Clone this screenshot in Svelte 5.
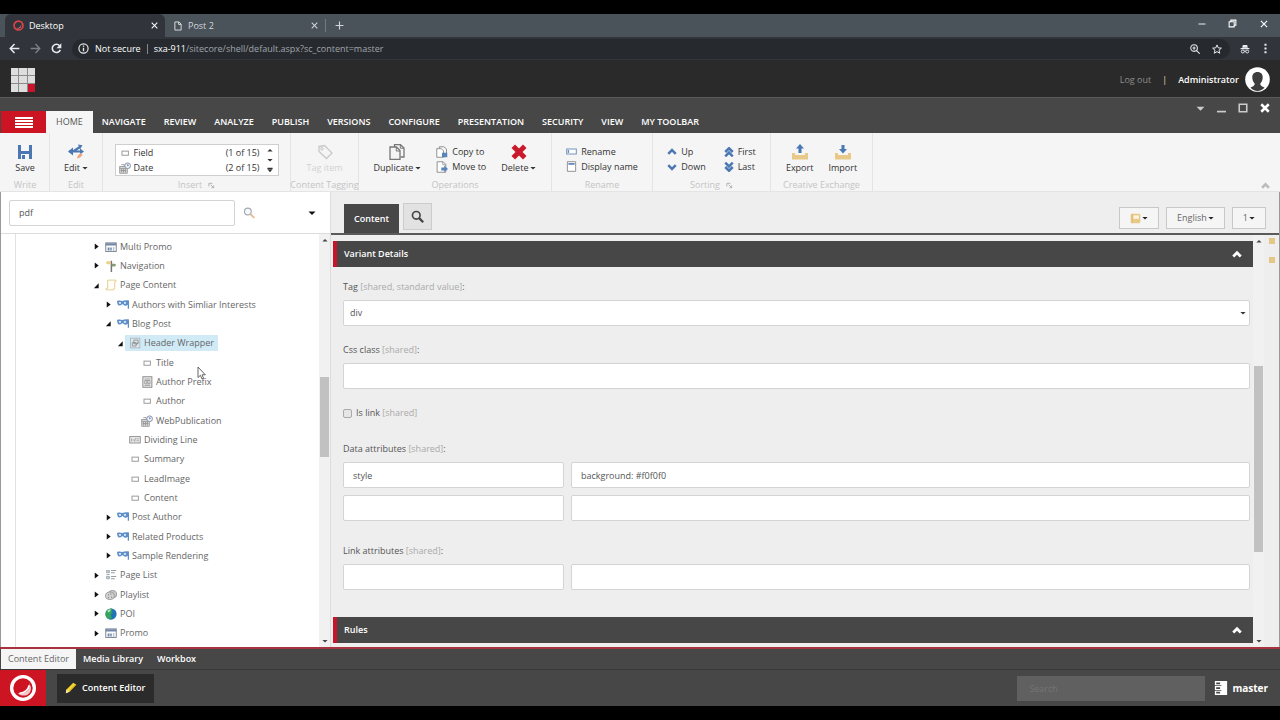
<script>
    const tabs = ["NAVIGATE", "REVIEW", "ANALYZE", "PUBLISH", "VERSIONS", "CONFIGURE", "PRESENTATION", "SECURITY", "VIEW", "MY TOOLBAR"];

    const tree = [
        { text: "Multi Promo", level: 0, icon: "promo", arrow: "closed" },
        { text: "Navigation", level: 0, icon: "signpost", arrow: "closed" },
        { text: "Page Content", level: 0, icon: "scroll", arrow: "open" },
        { text: "Authors with Simliar Interests", level: 1, icon: "mask", arrow: "closed" },
        { text: "Blog Post", level: 1, icon: "mask", arrow: "open" },
        { text: "Header Wrapper", level: 2, icon: "wrapper", arrow: "open" },
        { text: "Title", level: 3, icon: "field" },
        { text: "Author Prefix", level: 3, icon: "textbox" },
        { text: "Author", level: 3, icon: "field" },
        { text: "WebPublication", level: 3, icon: "date" },
        { text: "Dividing Line", level: 2, icon: "divider" },
        { text: "Summary", level: 2, icon: "field" },
        { text: "LeadImage", level: 2, icon: "field" },
        { text: "Content", level: 2, icon: "field" },
        { text: "Post Author", level: 1, icon: "mask", arrow: "closed" },
        { text: "Related Products", level: 1, icon: "mask", arrow: "closed" },
        { text: "Sample Rendering", level: 1, icon: "mask", arrow: "closed" },
        { text: "Page List", level: 0, icon: "pagelist", arrow: "closed" },
        { text: "Playlist", level: 0, icon: "reel", arrow: "closed" },
        { text: "POI", level: 0, icon: "globe", arrow: "closed" },
        { text: "Promo", level: 0, icon: "promo", arrow: "closed" }
    ];

    let selected = $state("Header Wrapper");
    let search = $state("pdf");
    let isLink = $state(false);
</script>

<svelte:head>
    <title>Desktop</title>
</svelte:head>

{#snippet icon(name, size)}
    <svg class="icon" width={size} height={size} viewBox="0 0 16 16" fill="none" aria-hidden="true">
        {#if name === "promo"}
            <rect x="1" y="2.5" width="14" height="11.5" fill="#fff" stroke="#7d8794" stroke-width="1.3" />
            <path d="M1 3h14v3H1z" fill="#7386a8" />
            <path d="M3.5 8.5h2.5v4H3.5zM7 8.5h2v4H7zM10.5 8.5h2v1.5h-2zM10.5 11.3h2v1.3h-2z" fill="#7386a8" />
        {:else if name === "signpost"}
            <path d="M8.5 1v15" stroke="#777" stroke-width="2" />
            <path d="M1 3.5l2-2h5v4H3z" fill="#eccf8a" />
            <path d="M9 5h4l2 1.8L13 8.5H9z" fill="#8b9b76" />
        {:else if name === "scroll"}
            <path d="M3.5 1.5h11v2h-1.5v9.5h-1.5v1.500h-10v-2H3.5z" fill="#fffdf5" stroke="#e3cf93" stroke-width="1.3" />
        {:else if name === "mask"}
            <path d="M0 2.5c3-1 5-.5 7 0 2-.5 5-1 9-.5V13h-1.700V7.500c-1.500 2-4.300 2-5.800.2L7.300 6.500 6 7.700C4.500 9.500 1 9.200.5 6z" fill="#5e8fc9" />
            <path d="M2.200 4.300h3.300L5 6.300H3zM9 4.300h3.300l-.8 2H9.700z" fill="#fff" />
        {:else if name === "wrapper"}
            <rect x="2" y="1.5" width="12.5" height="13" fill="#dfe5e8" stroke="#a3adb2" />
            <path d="M6.5 4h5.500v5H6.500zM4.500 7.500h5v4.500h-5zM10 10l3-3" stroke="#7c868b" />
        {:else if name === "field"}
            <rect x="4" y="5.5" width="8.5" height="5.5" fill="#fff" stroke="#999" stroke-width="1.3" />
        {:else if name === "textbox"}
            <rect x="2.500" y="1" width="12" height="14" fill="#eee" stroke="#888" stroke-width="1.300" />
            <path d="M4.500 4h8M4.500 12.500h8M5 6h7v4.500H5zM6 7l5 3M7 10l3-4" stroke="#8a8a8a" />
        {:else if name === "date"}
            <rect x="1" y="6" width="10" height="9" fill="#ddd" stroke="#888" />
            <path d="M1 8.500h10M3.500 9v5M6 9v5M8.500 9v5M2 11.500h8M3 3.500h4v2" stroke="#888" />
            <circle cx="11.500" cy="5" r="3.800" fill="#edf2fa" stroke="#8791a4" stroke-width="1.300" />
            <path d="M11.500 2.800V5.200l1.600-1" stroke="#5d74a3" />
        {:else if name === "divider"}
            <rect x="1" y="3.500" width="14" height="8.500" fill="#eee" stroke="#888" stroke-width="1.200" />
            <path d="M3.500 6v4M5 8h2M8.500 5.500l-1 5M10 6.500h3M10 9h3" stroke="#888" />
        {:else if name === "pagelist"}
            <path d="M2 2h4v3H2zM2 10h4v3H2z" fill="#c2cad1" stroke="#9aa3aa" />
            <path d="M8 2h7M8 5h5M8 10h7M8 13h5M2 7.500h4" stroke="#999" stroke-width="1.300" />
        {:else if name === "reel"}
            <ellipse cx="10" cy="7" rx="5.500" ry="5" fill="#c8c8c8" stroke="#888" />
            <ellipse cx="6.500" cy="9" rx="5.800" ry="5" fill="#d4d4d4" stroke="#888" />
            <path d="M4 7h1.500v1.500H4zM7 6h1.500v1.500H7zM4 10.500h1.500V12H4zM8 10h1.500v1.500H8z" fill="#888" />
        {:else if name === "globe"}
            <circle cx="8" cy="8" r="7.500" fill="#2173b8" />
            <path d="M2 3.800C5 .5 8 .2 10 1L8.500 4l2 2-3 2.500L9 12l-2 3.300C3 15 .5 11.500.5 8z" fill="#36a45c" />
            <path d="M3 4c2-2 4-2.300 5-1.500L5 6z" fill="#b9e8c0" />
        {:else if name === "save"}
            <path d="M1 1h14v14H1z" fill="#4b77b3" />
            <path d="M4 1h8v6H4zM4 10h8v5H4z" fill="#f4f6fa" />
            <path d="M5 11h3v4H5z" fill="#4b77b3" />
        {:else if name === "edit"}
            <path d="M1 7.500h5M5 7.500L12 3M5 7.500h9" stroke="#4b77b3" stroke-width="2.200" />
            <path d="M0 7.500l5-4v8zM10 0.500l4.500.8-2.500 4zM12 4.500l4 3-4 3z" fill="#4b77b3" />
            <path d="M9 14.500l1-3 2.500-2.500 2 2-2.500 2.500z" fill="#e9a27c" />
        {:else if name === "tag"}
            <path d="M2 2.500l5.500-1L15 9l-5.500 5.500L2 7.500z" stroke="#c8c8c8" stroke-width="1.300" />
            <circle cx="5" cy="4.800" r="1.300" stroke="#c8c8c8" />
        {:else if name === "duplicate"}
            <path d="M5.500 3V.7h6L15 4v9h-3.500" stroke="#777" stroke-width="1.300" />
            <path d="M1 3h6.500L11 6.500V15.300H1z" fill="#f5f5f5" stroke="#777" stroke-width="1.300" />
            <path d="M7.300 3v4H11M11.300 1v3.200H15" stroke="#777" />
        {:else if name === "copy"}
            <path d="M4.500 3V1h6L14 4v6" stroke="#888" stroke-width="1.200" />
            <path d="M1 3.500h6L10 6.500V15H1z" fill="#fff" stroke="#888" stroke-width="1.200" />
            <path d="M8 9h7v6H8z" fill="#5b84ba" />
        {:else if name === "move"}
            <path d="M1.500 1h8L13 4.500V15H1.500z" fill="#fff" stroke="#888" stroke-width="1.200" />
            <path d="M9 1v4h4" stroke="#888" />
            <path d="M7 8.500h4V6l5 4.500-5 4.500v-2.500H7z" fill="#5b84ba" />
        {:else if name === "delete"}
            <path d="M4 .5l4 4 4-4L15.500 4l-4 4 4 4-3.500 3.500-4-4-4 4L.5 12l4-4-4-4z" fill="#c9192b" />
        {:else if name === "rename"}
            <path d="M1 4.500h14v7H1z" fill="#fff" stroke="#7795bd" stroke-width="1.500" />
            <path d="M2.500 6h2v4h-2z" fill="#5b84ba" />
        {:else if name === "display"}
            <path d="M2 1h12v14H2z" fill="#fff" stroke="#888" stroke-width="1.300" />
            <path d="M3.500 3h9v2.500h-9z" fill="#5b84ba" />
        {:else if name === "up"}
            <path d="M2 11l6-6 6 6" stroke="#4b77b3" stroke-width="4" />
        {:else if name === "down"}
            <path d="M2 5l6 6 6-6" stroke="#4b77b3" stroke-width="4" />
        {:else if name === "first"}
            <path d="M2 8l6-6 6 6M2 15l6-6 6 6" stroke="#4b77b3" stroke-width="4" />
        {:else if name === "last"}
            <path d="M2 1l6 6 6-6M2 8l6 6 6-6" stroke="#4b77b3" stroke-width="4" />
        {:else if name === "export" || name === "import"}
            <path d="M0 9h3v2h10V9h3v6.500H0z" fill="#e8c98a" />
            <path d={name === "export" ? "M8 0l4 4.500H9.500V9h-3V4.500H4z" : "M8 9.500L4 5h2.500V1h3v4H12z"} fill="#4b77b3" />
        {:else if name === "lens"}
            <circle cx="6.500" cy="6" r="4.500" fill="#f6f8fb" stroke="#a3a9b5" stroke-width="1.500" />
            <path d="M10 9.500l5 5" stroke="#e4b993" stroke-width="2.500" />
        {:else if name === "find"}
            <circle cx="6.500" cy="6.500" r="4.700" stroke="#444" stroke-width="2" />
            <path d="M10 10l5 5" stroke="#444" stroke-width="2.800" />
        {:else if name === "launch"}
            <path d="M2 10V3h8M6 6l6 6M13 8v5H8" stroke="#aaa" stroke-width="2" />
        {:else if name === "book"}
            <rect x="1" y="1" width="14" height="14" rx="2" fill="#e8c98a" />
            <path d="M5 3.500h8v5H5z" fill="#fbf3df" />
            <path d="M3 1v14" stroke="#d9b46b" />
        {:else if name === "caret"}
            <path d="M1 5h14l-7 7z" fill="currentColor" />
        {:else if name === "caretup"}
            <path d="M1 12h14L8 5z" fill="currentColor" />
        {:else if name === "more"}
            <path d="M1 2h14v3H1zM1 6h14l-7 8z" fill="currentColor" />
        {:else if name === "closed"}
            <path d="M4 1l9 7-9 7z" fill="#111" />
        {:else if name === "open"}
            <path d="M13 3v11H2z" fill="#111" />
        {:else if name === "chevron"}
            <path d="M2 12l6-6 6 6" stroke="currentColor" stroke-width="4.500" />
        {:else if name === "cross"}
            <path d="M3 3l10 10M13 3L3 13" stroke="currentColor" stroke-width="1.800" />
        {:else if name === "boldcross"}
            <path d="M2 2l12 12M14 2L2 14" stroke="currentColor" stroke-width="4" />
        {:else if name === "plus"}
            <path d="M8 1v14M1 8h14" stroke="currentColor" stroke-width="2" />
        {:else if name === "minus"}
            <path d="M1 8h14" stroke="currentColor" stroke-width="1.800" />
        {:else if name === "lowbar"}
            <path d="M0 13.500h16" stroke="currentColor" stroke-width="3" />
        {:else if name === "square"}
            <path d="M2 2h12v12H2z" stroke="currentColor" stroke-width="2.500" />
        {:else if name === "restore"}
            <path d="M2 5h9v9H2zM5 5V2h9v9h-3" stroke="currentColor" stroke-width="1.900" />
        {:else if name === "back"}
            <path d="M15 8H2M8 1.500L1.800 8 8 14.500" stroke="currentColor" stroke-width="2.200" />
        {:else if name === "forward"}
            <path d="M1 8h13M8 1.500L14.200 8 8 14.500" stroke="currentColor" stroke-width="2" />
        {:else if name === "reload"}
            <path d="M13.500 10A6 6 0 1 1 12.500 4" stroke="currentColor" stroke-width="2.300" />
            <path d="M15 .5v7H8z" fill="currentColor" />
        {:else if name === "info"}
            <circle cx="8" cy="8" r="6.700" stroke="currentColor" stroke-width="1.700" />
            <path d="M8 7v5M8 3.800v1.800" stroke="currentColor" stroke-width="1.900" />
        {:else if name === "zoomin"}
            <circle cx="6.500" cy="6.500" r="5.300" stroke="currentColor" stroke-width="1.700" />
            <path d="M10.500 10.500l5 5M4 6.500h5M6.500 4v5" stroke="currentColor" stroke-width="1.700" />
        {:else if name === "star"}
            <path d="M8 1.500l2 4.700 5 .4-3.800 3.300 1.200 4.900L8 12.200l-4.400 2.600 1.200-4.900L1 6.600l5-.4z" stroke="currentColor" stroke-width="1.600" />
        {:else if name === "incognito"}
            <path d="M4.500 1.500h7l1 4.500h-9zM1 6.500h14v2H1z" fill="currentColor" />
            <circle cx="4.500" cy="12" r="2.400" stroke="currentColor" stroke-width="1.500" />
            <circle cx="11.500" cy="12" r="2.400" stroke="currentColor" stroke-width="1.500" />
            <path d="M6.500 11.500h3" stroke="currentColor" stroke-width="1.500" />
        {:else if name === "dots"}
            <path d="M6.500 1h3v3h-3zM6.500 6.500h3v3h-3zM6.500 12h3v3h-3z" fill="currentColor" />
        {:else if name === "page"}
            <path d="M3 1.500h6.500L13 5v9.500H3zM9 1.500V5.500h4" stroke="currentColor" stroke-width="1.600" />
        {:else if name === "favicon"}
            <circle cx="8" cy="8" r="6.500" stroke="#d8434a" stroke-width="2.500" />
            <path d="M12 5c0 4-2 6.500-6.500 6.500 2 2 7.500 1 6.500-6.500z" fill="#e87479" />
        {:else if name === "sitecore"}
            <circle cx="8" cy="8" r="6.500" fill="#cd1423" stroke="#fff" stroke-width="1.900" />
            <path d="M11.500 5c1 4-1.500 6.500-6.500 6 2.500 2.500 8 1.500 7.500-3.500z" fill="#f6c9cd" />
            <path d="M11.500 6.500c-.5 3-2.500 4.200-5.500 4.500" stroke="#fff" />
        {:else if name === "pencil"}
            <path d="M1 15l1-5L11 1l4 2.500L6 13z" fill="#f2d62d" />
            <path d="M1 15l1-5 4 3z" fill="#f7e6bd" />
            <path d="M5 12.500L14 3l1 .5L6 13z" fill="#d9a514" />
        {:else if name === "server"}
            <path d="M1 0h14v16H1z" fill="#fff" />
            <path d="M2.500 1.700h4.500v2H2.500zM2.500 7h4.500v2H2.500zM2.500 12.300h4.500v2H2.500zM0 4.800h8.500v1H0zM0 10.200h8.500v1H0z" fill="#474747" />
        {/if}
    </svg>
{/snippet}

{#snippet scrollbar(kind)}
    <div class="scrollbar {kind}">
        {@render icon("caretup", 6)}
        <div class="track"><div class="thumb"></div></div>
        {@render icon("caret", 6)}
    </div>
{/snippet}

{#snippet pair(id, name, value)}
    <div class="pair">
        <input class="box" {id} aria-label="Attribute name" value={name} />
        <input class="box" aria-label="Attribute value" {value} />
    </div>
{/snippet}

<div class="page">
    <div class="browser-tabs">
        <div class="browser-tab active">
            {@render icon("favicon", 11)}
            <span>Desktop</span>
            <button aria-label="Close Desktop">{@render icon("cross", 9)}</button>
        </div>
        <div class="browser-tab">
            {@render icon("page", 10)}
            <span>Post 2</span>
            <button aria-label="Close Post 2">{@render icon("cross", 9)}</button>
        </div>
        <button class="new-tab" aria-label="New tab">{@render icon("plus", 9)}</button>
        <div class="window-buttons">
            <button aria-label="Minimize">{@render icon("minus", 8)}</button>
            <button aria-label="Restore">{@render icon("restore", 9)}</button>
            <button aria-label="Close window">{@render icon("cross", 10)}</button>
        </div>
    </div>

    <div class="browser-bar">
        <button aria-label="Back">{@render icon("back", 11)}</button>
        <button class="dim" aria-label="Forward">{@render icon("forward", 11)}</button>
        <button aria-label="Reload">{@render icon("reload", 11)}</button>
        <div class="address">
            {@render icon("info", 11)}
            <span class="insecure">Not secure</span>
            <span class="url"><b>sxa-911</b>/sitecore/shell/default.aspx?sc_content=master</span>
            <button aria-label="Zoom">{@render icon("zoomin", 10)}</button>
            <button aria-label="Bookmark">{@render icon("star", 10)}</button>
        </div>
        <button aria-label="Incognito">{@render icon("incognito", 10)}</button>
        <button aria-label="Browser menu">{@render icon("dots", 11)}</button>
    </div>

    <header>
        <a class="logo" href="#start" aria-label="Start page">
            {#each Array(9) as _, i}
                <i class:red={i === 8}></i>
            {/each}
        </a>
        <a class="logout" href="#logout">Log out</a>
        <span class="bar">|</span>
        <span class="user">Administrator</span>
        <svg class="avatar" width="25" height="25" viewBox="0 0 25 25" aria-hidden="true">
            <circle cx="12.500" cy="12.500" r="12.300" fill="#fff" />
            <path d="M12.500 5c3.500 0 5.500 2.200 5.200 6-.2 3-1.500 4.700-2.500 5.800.2 2 1.800 2.700 4.300 3.700-3 4.500-11 4.500-14 0 2.500-1 4.100-1.700 4.300-3.700-1-1.100-2.300-2.800-2.500-5.800C7 7.200 9 5 12.500 5z" fill="#3d3d3d" />
        </svg>
    </header>

    <nav class="ribbon-tabs">
        <button class="menu" aria-label="Menu"><i></i><i></i><i></i><i></i></button>
        <button class="tab current">HOME</button>
        {#each tabs as tab}
            <button class="tab">{tab}</button>
        {/each}
        <div class="app-buttons">
            <button aria-label="Options">{@render icon("caret", 9)}</button>
            <button aria-label="Minimize editor">{@render icon("lowbar", 9)}</button>
            <button aria-label="Maximize editor">{@render icon("square", 10)}</button>
            <button class="white" aria-label="Close editor">{@render icon("boldcross", 10)}</button>
        </div>
    </nav>

    <section class="ribbon">
        <div class="group">
            <div class="tools">
                <button class="big">{@render icon("save", 16)}<span>Save</span></button>
            </div>
            <div class="caption">Write</div>
        </div>
        <div class="group">
            <div class="tools">
                <button class="big">{@render icon("edit", 16)}<span>Edit{@render icon("caret", 6)}</span></button>
            </div>
            <div class="caption">Edit</div>
        </div>
        <div class="group">
            <div class="tools">
                <div class="insert">
                    <div class="options">
                        <button>{@render icon("field", 12)}<span>Field</span><span>(1 of 15)</span></button>
                        <button>{@render icon("date", 12)}<span>Date</span><span>(2 of 15)</span></button>
                    </div>
                    <div class="steps">
                        <button aria-label="Previous">{@render icon("caretup", 6)}</button>
                        <button aria-label="Next">{@render icon("caret", 6)}</button>
                        <button aria-label="More">{@render icon("more", 6)}</button>
                    </div>
                </div>
            </div>
            <div class="caption">Insert {@render icon("launch", 7)}</div>
        </div>
        <div class="group">
            <div class="tools">
                <button class="big" disabled>{@render icon("tag", 16)}<span>Tag item</span></button>
            </div>
            <div class="caption">Content Tagging</div>
        </div>
        <div class="group">
            <div class="tools">
                <button class="big">{@render icon("duplicate", 16)}<span>Duplicate{@render icon("caret", 6)}</span></button>
                <div class="smalls">
                    <button>{@render icon("copy", 12)}Copy to</button>
                    <button>{@render icon("move", 12)}Move to</button>
                </div>
                <button class="big">{@render icon("delete", 16)}<span>Delete{@render icon("caret", 6)}</span></button>
            </div>
            <div class="caption">Operations</div>
        </div>
        <div class="group">
            <div class="tools">
                <div class="smalls">
                    <button>{@render icon("rename", 11)}Rename</button>
                    <button>{@render icon("display", 11)}Display name</button>
                </div>
            </div>
            <div class="caption">Rename</div>
        </div>
        <div class="group">
            <div class="tools">
                <div class="smalls">
                    <button>{@render icon("up", 10)}Up</button>
                    <button>{@render icon("down", 10)}Down</button>
                </div>
                <div class="smalls">
                    <button>{@render icon("first", 10)}First</button>
                    <button>{@render icon("last", 10)}Last</button>
                </div>
            </div>
            <div class="caption">Sorting {@render icon("launch", 7)}</div>
        </div>
        <div class="group">
            <div class="tools">
                <button class="big">{@render icon("export", 16)}<span>Export</span></button>
                <button class="big">{@render icon("import", 16)}<span>Import</span></button>
            </div>
            <div class="caption">Creative Exchange</div>
        </div>
        <button class="collapse" aria-label="Collapse ribbon">{@render icon("chevron", 9)}</button>
    </section>

    <main>
        <aside>
            <form class="search">
                <input class="box" aria-label="Search tree" bind:value={search} />
                <button type="button" aria-label="Search">{@render icon("lens", 12)}</button>
                <button type="button" class="options-caret" aria-label="Search options">{@render icon("caret", 8)}</button>
            </form>
            <div class="tree-area">
                <ul class="tree">
                    {#each tree as node}
                        <li style:padding-left="{77 + node.level * 12}px">
                            <span class="arrow">
                                {#if node.arrow}{@render icon(node.arrow, 7)}{/if}
                            </span>
                            <button class="node" class:selected={node.text === selected} onclick={() => (selected = node.text)}>
                                {@render icon(node.icon, 12)}{node.text}
                            </button>
                        </li>
                    {/each}
                </ul>
                {@render scrollbar("left")}
            </div>
        </aside>

        <div class="editor">
            <div class="editor-tabs">
                <button class="content-tab">Content</button>
                <button class="find" aria-label="Find">{@render icon("find", 13)}</button>
                <div class="pickers">
                    <button aria-label="Icon">{@render icon("book", 11)}{@render icon("caret", 6)}</button>
                    <button>English{@render icon("caret", 6)}</button>
                    <button>1{@render icon("caret", 6)}</button>
                </div>
            </div>
            <div class="editor-area">
                <div class="form">
                    <button class="section">Variant Details {@render icon("chevron", 10)}</button>
                    <div class="fields">
                        <div class="field">
                            <label for="tag">Tag <span>[shared, standard value]</span>:</label>
                            <div class="select">
                                <select class="box" id="tag"><option>div</option></select>
                                {@render icon("caret", 6)}
                            </div>
                        </div>
                        <div class="field">
                            <label for="css">Css class <span>[shared]</span>:</label>
                            <input class="box" id="css" />
                        </div>
                        <div class="check">
                            <input type="checkbox" id="link" bind:checked={isLink} />
                            <label for="link">Is link <span>[shared]</span></label>
                        </div>
                        <div class="field">
                            <label for="data">Data attributes <span>[shared]</span>:</label>
                            {@render pair("data", "style", "background: #f0f0f0")}
                            {@render pair("data2", "", "")}
                        </div>
                        <div class="field">
                            <label for="linkattr">Link attributes <span>[shared]</span>:</label>
                            {@render pair("linkattr", "", "")}
                        </div>
                    </div>
                    <button class="section">Rules {@render icon("chevron", 10)}</button>
                </div>
                {@render scrollbar("right")}
                <div class="marks"><i></i><i></i></div>
            </div>
        </div>
    </main>

    <nav class="apps">
        <button class="current">Content Editor</button>
        <button>Media Library</button>
        <button>Workbox</button>
    </nav>

    <footer>
        <button class="start" aria-label="Sitecore">{@render icon("sitecore", 28)}</button>
        <button class="task">{@render icon("pencil", 12)}Content Editor</button>
        <input class="global-search" placeholder="Search" aria-label="Search" />
        <button class="db">{@render icon("server", 14)}master</button>
    </footer>

    <svg class="cursor" width="9" height="14" viewBox="0 0 9 14" aria-hidden="true">
        <path d="M1 1v10.500l2.400-2.200 1.600 3.700 1.600-.7L5 8.800h3.300z" fill="#fff" stroke="#555" stroke-width=".9" />
    </svg>
</div>

<style>
    :global(body) {
        background: #000;
    }

    .page {
        position: relative;
        box-sizing: border-box;
        min-height: 100vh;
        display: flex;
        flex-direction: column;
        border-top: 14px solid #000;
        border-bottom: 14px solid #000;
        font: 9px/12px "Open Sans", "Noto Sans", sans-serif;
        color: #333;
        overflow: hidden;
    }

    .page * {
        box-sizing: border-box;
    }

    button, input, select {
        margin: 0;
        padding: 0;
        border: 0;
        background: none;
        color: inherit;
        font: inherit;
    }

    button {
        display: flex;
        align-items: center;
        white-space: nowrap;
    }

    a {
        color: inherit;
        text-decoration: none;
    }

    .icon {
        display: block;
        flex: none;
    }

    .box {
        width: 100%;
        height: 26px;
        padding: 0 9px;
        border: 1px solid #d4d4d4;
        border-radius: 2px;
        background: #fff;
        color: #555;
    }

    /* browser chrome */
    .browser-tabs {
        display: flex;
        height: 23px;
        padding-left: 5px;
        background: #4a525a;
        color: #d4d7da;
    }

    .browser-tab {
        display: flex;
        align-items: center;
        gap: 5px;
        width: 160px;
        padding: 0 6px 0 8px;
    }

    .browser-tab button {
        margin-left: auto;
    }

    .browser-tab.active {
        border-radius: 6px 6px 0 0;
        background: #31343b;
        color: #fff;
    }

    .new-tab {
        align-self: center;
        height: 13px;
        padding-left: 9px;
        border-left: 1px solid #737a81;
    }

    .window-buttons {
        display: flex;
        gap: 22px;
        margin-left: auto;
        padding: 0 11px 4px 0;
        color: #fff;
    }

    .browser-bar {
        display: flex;
        align-items: center;
        gap: 10px;
        height: 23px;
        padding: 0 9px;
        background: #31343b;
        color: #e8eaed;
    }

    .browser-bar .dim {
        color: #7c8085;
    }

    .address {
        flex: 1;
        display: flex;
        align-items: center;
        gap: 6px;
        height: 20px;
        padding: 0 8px 0 6px;
        border-radius: 10px;
        background: #262a2f;
    }

    .insecure {
        padding-right: 6px;
        border-right: 1px solid #85898d;
        line-height: 10px;
        color: #fff;
    }

    .url {
        flex: 1;
        color: #a0a5aa;
    }

    .url b {
        font-weight: 500;
        color: #fff;
    }

    .address button + button {
        margin-left: 6px;
    }

    /* desktop header */
    header {
        display: flex;
        align-items: center;
        gap: 11px;
        height: 38px;
        padding: 2px 10px 0 11px;
        border-bottom: 1px solid #5a5a5a;
        background: #2a2a2a;
        color: #fff;
    }

    .logo {
        display: grid;
        grid-template-columns: repeat(3, 1fr);
        gap: 1px;
        width: 24px;
        height: 24px;
        margin-right: auto;
        background: #8a8a8a;
    }

    .logo i {
        background: #dedede;
    }

    .logo .red {
        background: #c8142a;
    }

    .logout {
        color: #8d8d8d;
    }

    .bar {
        color: #e6dda8;
    }

    .user {
        font-weight: 600;
    }

    .avatar {
        margin-left: -5px;
    }

    .ribbon-tabs {
        display: flex;
        align-items: flex-end;
        height: 35px;
        padding-left: 1px;
        background: #474747;
        color: #fff;
    }

    .menu {
        flex-direction: column;
        justify-content: center;
        gap: 1px;
        width: 45px;
        height: 22px;
        background: #cd1423;
    }

    .menu i {
        width: 18px;
        height: 2px;
        background: #fff;
    }

    .tab {
        height: 22px;
        padding: 0 9px;
        font-weight: 600;
    }

    .tab.current {
        padding: 0 10px;
        background: #f5f5f5;
        color: #555;
        font-weight: 400;
    }

    .app-buttons {
        display: flex;
        align-self: flex-start;
        gap: 12px;
        margin-left: auto;
        padding: 5px 10px 0 0;
        color: #ccc;
    }

    .app-buttons .white {
        color: #fff;
    }

    /* ribbon */
    .ribbon {
        display: grid;
        grid-template-columns: 49px 53px 188px 68px 193px 101px 118px 102px 1fr;
        height: 59px;
        padding-left: 1px;
        border-bottom: 1px solid #e4e4e4;
        background: #f5f5f5;
    }

    .group {
        display: flex;
        flex-direction: column;
        justify-content: space-between;
        padding-top: 11px;
        border-right: 1px solid #e4e4e4;
    }

    .tools {
        display: flex;
        justify-content: center;
        align-items: flex-start;
        gap: 15px;
    }

    .big {
        flex-direction: column;
        gap: 2px;
    }

    .big span {
        display: flex;
        align-items: center;
        gap: 2px;
    }

    .big:disabled {
        color: #d2d2d2;
    }

    .caption {
        display: flex;
        align-items: center;
        justify-content: center;
        gap: 6px;
        color: #c4c4c4;
        white-space: nowrap;
    }

    .insert {
        display: flex;
        width: 164px;
        height: 32px;
        border: 1px solid #cfcfcf;
        background: #fff;
    }

    .options {
        flex: 1;
        display: flex;
        flex-direction: column;
    }

    .options button {
        flex: 1;
        gap: 3px;
        padding-left: 3px;
    }

    .options span:last-child {
        margin-left: auto;
    }

    .steps {
        display: flex;
        flex-direction: column;
        justify-content: space-around;
        padding: 0 5px 0 7px;
    }

    .smalls {
        display: flex;
        flex-direction: column;
    }

    .smalls button {
        gap: 4px;
        height: 15px;
    }

    .smalls + .smalls {
        margin-left: 3px;
    }

    .collapse {
        place-self: end;
        padding: 0 10px 1px 0;
        color: #bbb;
    }

    /* content tree */
    main {
        flex: 1;
        display: grid;
        grid-template-columns: 330px 1fr;
        border-left: 1px solid #999;
        border-right: 1px solid #999;
        background: #eee;
    }

    aside {
        display: flex;
        flex-direction: column;
        border-right: 1px solid #ddd;
        background: #fff;
    }

    .search {
        display: flex;
        align-items: center;
        gap: 8px;
        height: 42px;
        padding: 0 14px 0 8px;
        border-bottom: 1px solid #ddd;
    }

    .search .box {
        width: 226px;
    }

    .options-caret {
        margin-left: auto;
        color: #111;
    }

    .tree-area {
        flex: 1;
        display: flex;
        padding-left: 14px;
    }

    .tree {
        flex: 1;
        display: flex;
        flex-direction: column;
        margin: 0;
        padding: 3px 0 4px;
        border-left: 1px solid #e2e2e2;
        list-style: none;
    }

    .tree li {
        flex: 1;
        display: flex;
        align-items: center;
        color: #666;
    }

    .arrow {
        width: 8px;
    }

    .node {
        gap: 3px;
        height: 16px;
        padding: 0 4px;
    }

    .node.selected {
        background: #d0ebf6;
    }

    .scrollbar {
        display: flex;
        flex-direction: column;
        align-items: center;
        width: 11px;
        padding: 3px 0;
        background: #f1f1f1;
        color: #444;
    }

    .track {
        flex: 1;
        width: 9px;
    }

    .thumb {
        height: 80px;
        margin-top: 134px;
        background: #c1c1c1;
    }

    .right .thumb {
        height: 186px;
        margin-top: 122px;
    }

    /* item editor */
    .editor {
        display: flex;
        flex-direction: column;
    }

    .editor-tabs {
        display: flex;
        align-items: flex-end;
        gap: 4px;
        height: 43px;
        padding: 0 13px;
        border-bottom: 2px solid #5a5a5a;
    }

    .content-tab {
        height: 29px;
        padding: 0 10px;
        background: #474747;
        color: #fff;
        font-weight: 600;
    }

    .find {
        align-self: center;
        justify-content: center;
        width: 29px;
        height: 27px;
        margin-top: 8px;
        border: 1px solid #ccc;
        background: #e2e2e2;
    }

    .pickers {
        display: flex;
        gap: 7px;
        margin-left: auto;
        padding-bottom: 4px;
    }

    .pickers button {
        gap: 1px;
        height: 22px;
        padding: 0 10px;
        border: 1px solid #c8c8c8;
        background: #f5f5f5;
        color: #666;
    }

    .pickers .icon:last-child {
        color: #222;
    }

    .editor-area {
        flex: 1;
        display: flex;
        padding-left: 2px;
    }

    .form {
        flex: 1;
        padding: 6px 0 4px;
    }

    .section {
        justify-content: space-between;
        width: 100%;
        height: 26px;
        padding: 0 11px 0 7px;
        border-left: 4px solid #c8142a;
        background: #474747;
        color: #fff;
        font-weight: 600;
    }

    .fields {
        display: flex;
        flex-direction: column;
        gap: 24px;
        padding: 14px 3px 27px 10px;
    }

    .field {
        display: flex;
        flex-direction: column;
        gap: 7px;
    }

    .field:nth-child(-n+2) {
        margin-bottom: -6px;
    }

    label {
        color: #555;
    }

    label span {
        color: #aaa;
    }

    .select {
        position: relative;
    }

    .select select {
        display: block;
        padding: 0 6px;
        appearance: none;
    }

    .select .icon {
        position: absolute;
        top: 10px;
        right: 4px;
    }

    .check {
        display: flex;
        align-items: center;
        gap: 4px;
    }

    .check input {
        width: 9px;
        height: 9px;
        border: 1px solid #aaa;
        border-radius: 2px;
        background: #e6e6e6;
        appearance: none;
    }

    .check input:checked {
        background: #666;
    }

    .pair {
        display: grid;
        grid-template-columns: 221px 1fr;
        gap: 7px;
    }

    .marks {
        display: flex;
        flex-direction: column;
        align-items: center;
        gap: 13px;
        width: 15px;
        padding-top: 3px;
    }

    .marks i {
        width: 6px;
        height: 6px;
        background: #e3c785;
    }

    /* bottom bars */
    .apps {
        display: flex;
        height: 23px;
        padding-left: 1px;
        border-top: 2px solid #a8323e;
        border-bottom: 1px solid #383838;
        background: #474747;
        color: #fff;
        font-weight: 600;
    }

    .apps button {
        padding: 0 7px;
    }

    .apps .current {
        background: #f5f5f5;
        color: #666;
        font-weight: 400;
    }

    footer {
        display: flex;
        align-items: center;
        height: 36px;
        padding-right: 12px;
        background: #474747;
        color: #fff;
        font-weight: 600;
    }

    .start {
        justify-content: center;
        width: 46px;
        height: 36px;
        background: #cd1423;
    }

    .task {
        gap: 5px;
        height: 29px;
        margin-left: 11px;
        padding: 0 9px 0 8px;
        background: #2b2b2b;
    }

    .global-search {
        width: 188px;
        height: 25px;
        margin: 0 9px 0 auto;
        padding: 0 12px;
        background: #606060;
        font-weight: 400;
    }

    .global-search::placeholder {
        color: #747474;
    }

    .db {
        gap: 4px;
        font-size: 10px;
        font-weight: 700;
    }

    .cursor {
        position: absolute;
        top: 352px;
        left: 197px;
    }
</style>
